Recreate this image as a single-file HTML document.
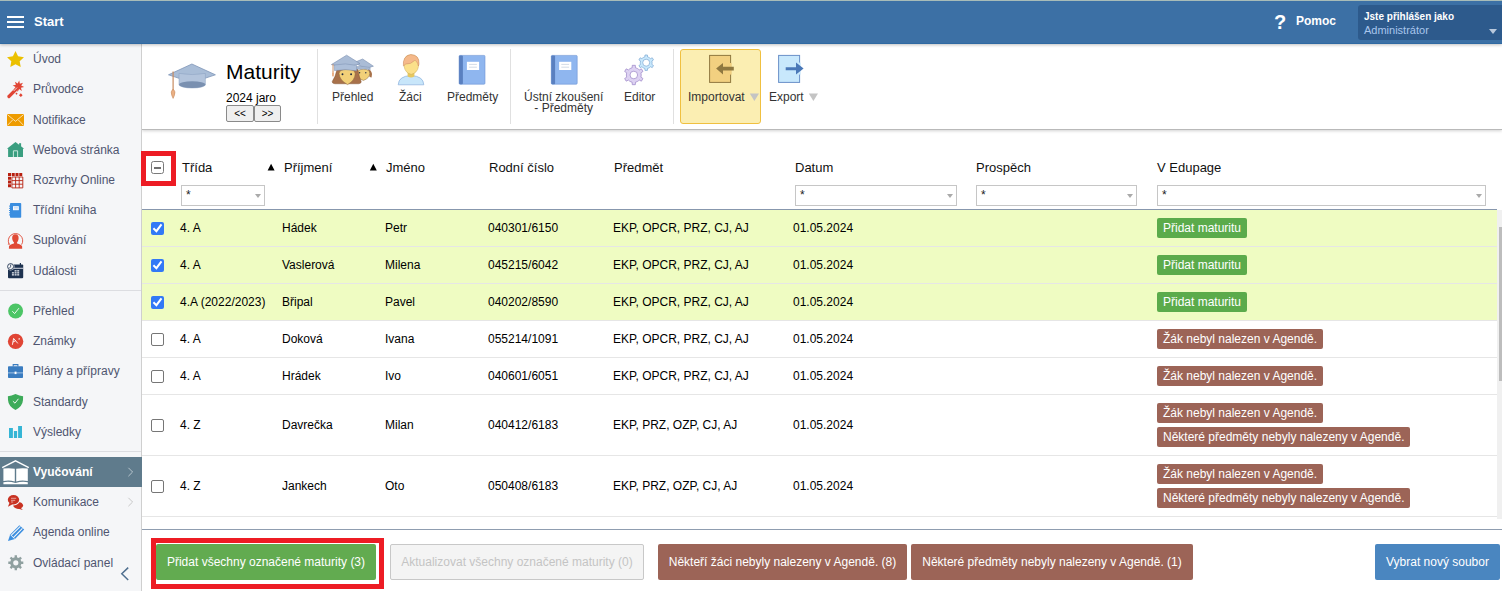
<!DOCTYPE html>
<html><head><meta charset="utf-8">
<style>
*{box-sizing:border-box}
html,body{margin:0;padding:0}
body{width:1502px;height:591px;overflow:hidden;position:relative;background:#fff;font-family:"Liberation Sans",sans-serif;color:#000}
.a{position:absolute}
.t{position:absolute;white-space:nowrap;line-height:14px;font-size:12px}
#top{left:0;top:0;width:1502px;height:44px;background:#3c70a5;border-top:1px solid #a8bcb8;border-bottom:1px solid #2f69a2;box-shadow:0 1px 3px rgba(0,0,0,.25);z-index:5}
#side{left:0;top:44px;width:142px;height:547px;background:#f5f6f8;border-right:1px solid #cfcfcf;z-index:2}
.si{position:absolute;left:33px;font-size:12px;line-height:14px;color:#4f5570;white-space:nowrap}
.ic{position:absolute;left:7px;width:17px;height:17px}
.sep{position:absolute;left:0;width:141px;height:1px;background:#dcdde1}
#tb{left:142px;top:44px;width:1360px;height:86px;background:#fff;border-bottom:1px solid #b9b9b9;box-shadow:0 1px 3px rgba(0,0,0,.18);z-index:1}
.vs{position:absolute;top:49px;width:1px;height:75px;background:#e0e0e0;z-index:3}
.bl{position:absolute;font-size:12px;line-height:11px;color:#333;white-space:nowrap;text-align:center;z-index:3}
.th{position:absolute;top:160px;font-size:13px;line-height:15px;color:#111;white-space:nowrap}
.flt{position:absolute;top:185px;height:21px;border:1px solid #c6c6c6;background:#fff}
.flt span{position:absolute;left:4px;top:2px;font-size:12px;color:#222}
.flt i{position:absolute;right:3px;top:8px;width:0;height:0;border-left:3.5px solid transparent;border-right:3.5px solid transparent;border-top:4px solid #aaa}
.row{position:absolute;left:142px;width:1355px;border-bottom:1px solid #e6e6e6}
.g{background:#effcc2}
.td{position:absolute;font-size:12px;line-height:14px;color:#000;white-space:nowrap}
.cb{position:absolute;left:151px;width:13px;height:13px;border-radius:2px}
.cbon{background:#3279f6}
.cboff{border:1px solid #767676;background:#fff}
.cb svg{display:block}
.bd{position:absolute;left:1157px;height:20px;border-radius:2px;color:#fff;font-size:12px;line-height:14px;padding:3px 6px 0 6px;white-space:nowrap}
.bg{background:#5bab4b}
.bb{background:#9c6457}
.btn{position:absolute;top:544px;height:36px;border-radius:2px;color:#fff;font-size:12px;line-height:36px;text-align:center;white-space:nowrap}
</style></head><body>

<!-- TOP BAR -->
<div id="top" class="a">
  <div class="a" style="left:7px;top:15px;width:17px;height:2px;background:#fff"></div>
  <div class="a" style="left:7px;top:20px;width:17px;height:2px;background:#fff"></div>
  <div class="a" style="left:7px;top:25px;width:17px;height:2px;background:#fff"></div>
  <div class="t" style="left:34px;top:14px;font-size:13px;font-weight:bold;color:#fff">Start</div>
  <div class="t" style="left:1274px;top:10px;font-size:20px;line-height:22px;font-weight:bold;color:#fff">?</div>
  <div class="t" style="left:1296px;top:13px;font-weight:bold;color:#fff">Pomoc</div>
  <div class="a" style="left:1358px;top:4px;width:150px;height:35px;background:#2d5a8c;border-radius:3px"></div>
  <div class="t" style="left:1364px;top:9px;font-size:10px;font-weight:bold;color:#fff">Jste přihlášen jako</div>
  <div class="t" style="left:1364px;top:22px;font-size:11px;color:#a9c6ec">Administrátor</div>
  <div class="a" style="left:1489px;top:28px;width:0;height:0;border-left:4px solid transparent;border-right:4px solid transparent;border-top:5px solid #b8c8dc"></div>
</div>

<!-- SIDEBAR -->
<div id="side" class="a">
</div>
<div id="sideitems" class="a" style="left:0;top:0;z-index:3">
  <div class="si" style="top:52px">Úvod</div>
  <div class="si" style="top:82px">Průvodce</div>
  <div class="si" style="top:113px">Notifikace</div>
  <div class="si" style="top:143px">Webová stránka</div>
  <div class="si" style="top:173px">Rozvrhy Online</div>
  <div class="si" style="top:203px">Třídní kniha</div>
  <div class="si" style="top:233px">Suplování</div>
  <div class="si" style="top:264px">Události</div>
  <div class="sep" style="top:290px"></div>
  <div class="si" style="top:304px">Přehled</div>
  <div class="si" style="top:334px">Známky</div>
  <div class="si" style="top:364px">Plány a přípravy</div>
  <div class="si" style="top:395px">Standardy</div>
  <div class="si" style="top:425px">Výsledky</div>
  <div class="sep" style="top:451px"></div>
  <div class="a" style="left:0;top:457px;width:142px;height:30px;background:#5f7b8c"></div>
  <div class="si" style="top:465px;color:#fff;font-weight:bold">Vyučování</div>
  <div class="si" style="top:495px">Komunikace</div>
  <div class="si" style="top:525px">Agenda online</div>
  <div class="si" style="top:556px">Ovládací panel</div>
</div>

<!-- TOOLBAR -->
<div id="tb" class="a"></div>
<div class="vs" style="left:317px"></div>
<div class="vs" style="left:510px"></div>
<div class="vs" style="left:673px"></div>
<div class="t" style="left:226px;top:61px;font-size:21px;line-height:22px;color:#000;z-index:3">Maturity</div>
<div class="t" style="left:226px;top:91px;color:#000;z-index:3">2024 jaro</div>
<div class="a" style="left:226px;top:105px;width:28px;height:17px;border:1px solid #8a8a8a;border-radius:2px;background:#efefef;z-index:3;font-size:10px;line-height:16px;text-align:center">&lt;&lt;</div>
<div class="a" style="left:254px;top:105px;width:27px;height:17px;border:1px solid #8a8a8a;border-radius:2px;background:#efefef;z-index:3;font-size:10px;line-height:16px;text-align:center">&gt;&gt;</div>

<div class="a" style="left:680px;top:49px;width:81px;height:75px;background:#fbeeb2;border:1px solid #f0c040;border-radius:3px;z-index:2"></div>

<div class="bl" style="left:332px;top:92px">Přehled</div>
<div class="bl" style="left:399px;top:92px">Žáci</div>
<div class="bl" style="left:447px;top:92px">Předměty</div>
<div class="bl" style="left:524px;top:92px">Ústní zkoušení<br>- Předměty</div>
<div class="bl" style="left:624px;top:92px">Editor</div>
<div class="bl" style="left:688px;top:92px">Importovat</div>
<div class="bl" style="left:769px;top:92px">Export</div>

<!-- TABLE HEADER -->
<div class="a" style="left:142px;top:130px;width:1360px;height:80px;background:#fff"></div>
<div class="a" style="left:142px;top:209px;width:1355px;height:1px;background:#8797ad"></div>
<div class="th" style="left:182px">Třída</div>
<div class="th" style="left:284px">Příjmení</div>
<div class="th" style="left:386px">Jméno</div>
<div class="th" style="left:489px">Rodní číslo</div>
<div class="th" style="left:614px">Předmět</div>
<div class="th" style="left:795px">Datum</div>
<div class="th" style="left:976px">Prospěch</div>
<div class="th" style="left:1157px">V Edupage</div>
<div class="flt" style="left:181px;width:84px"><span>*</span><i></i></div>
<div class="flt" style="left:795px;width:162px"><span>*</span><i></i></div>
<div class="flt" style="left:976px;width:161px"><span>*</span><i></i></div>
<div class="flt" style="left:1157px;width:329px"><span>*</span><i></i></div>

<!-- ROWS -->
<div class="row g" style="top:210px;height:37px"></div>
<div class="row g" style="top:247px;height:37px"></div>
<div class="row g" style="top:284px;height:37px"></div>
<div class="row" style="top:321px;height:37px"></div>
<div class="row" style="top:358px;height:37px"></div>
<div class="row" style="top:395px;height:61px"></div>
<div class="row" style="top:456px;height:61px"></div>

<div class="cb cbon" style="top:222px"><svg width=13 height=13 viewBox="0 0 13 13"><path d="M2.4 6.3 L5.4 9.2 L10.5 2.3" stroke="#fff" stroke-width="2" fill="none"/></svg></div>
<div class="td" style="left:180px;top:221px">4. A</div>
<div class="td" style="left:282px;top:221px">Hádek</div>
<div class="td" style="left:385px;top:221px">Petr</div>
<div class="td" style="left:488px;top:221px">040301/6150</div>
<div class="td" style="left:613px;top:221px">EKP, OPCR, PRZ, CJ, AJ</div>
<div class="td" style="left:793px;top:221px">01.05.2024</div>
<div class="bd bg" style="top:218px">Přidat maturitu</div>
<div class="cb cbon" style="top:259px"><svg width=13 height=13 viewBox="0 0 13 13"><path d="M2.4 6.3 L5.4 9.2 L10.5 2.3" stroke="#fff" stroke-width="2" fill="none"/></svg></div>
<div class="td" style="left:180px;top:258px">4. A</div>
<div class="td" style="left:282px;top:258px">Vaslerová</div>
<div class="td" style="left:385px;top:258px">Milena</div>
<div class="td" style="left:488px;top:258px">045215/6042</div>
<div class="td" style="left:613px;top:258px">EKP, OPCR, PRZ, CJ, AJ</div>
<div class="td" style="left:793px;top:258px">01.05.2024</div>
<div class="bd bg" style="top:255px">Přidat maturitu</div>
<div class="cb cbon" style="top:296px"><svg width=13 height=13 viewBox="0 0 13 13"><path d="M2.4 6.3 L5.4 9.2 L10.5 2.3" stroke="#fff" stroke-width="2" fill="none"/></svg></div>
<div class="td" style="left:180px;top:295px">4.A (2022/2023)</div>
<div class="td" style="left:282px;top:295px">Břipal</div>
<div class="td" style="left:385px;top:295px">Pavel</div>
<div class="td" style="left:488px;top:295px">040202/8590</div>
<div class="td" style="left:613px;top:295px">EKP, OPCR, PRZ, CJ, AJ</div>
<div class="td" style="left:793px;top:295px">01.05.2024</div>
<div class="bd bg" style="top:292px">Přidat maturitu</div>
<div class="cb cboff" style="top:333px"></div>
<div class="td" style="left:180px;top:332px">4. A</div>
<div class="td" style="left:282px;top:332px">Doková</div>
<div class="td" style="left:385px;top:332px">Ivana</div>
<div class="td" style="left:488px;top:332px">055214/1091</div>
<div class="td" style="left:613px;top:332px">EKP, OPCR, PRZ, CJ, AJ</div>
<div class="td" style="left:793px;top:332px">01.05.2024</div>
<div class="bd bb" style="top:329px">Žák nebyl nalezen v Agendě.</div>
<div class="cb cboff" style="top:370px"></div>
<div class="td" style="left:180px;top:369px">4. A</div>
<div class="td" style="left:282px;top:369px">Hrádek</div>
<div class="td" style="left:385px;top:369px">Ivo</div>
<div class="td" style="left:488px;top:369px">040601/6051</div>
<div class="td" style="left:613px;top:369px">EKP, OPCR, PRZ, CJ, AJ</div>
<div class="td" style="left:793px;top:369px">01.05.2024</div>
<div class="bd bb" style="top:366px">Žák nebyl nalezen v Agendě.</div>
<div class="cb cboff" style="top:419px"></div>
<div class="td" style="left:180px;top:418px">4. Z</div>
<div class="td" style="left:282px;top:418px">Davrečka</div>
<div class="td" style="left:385px;top:418px">Milan</div>
<div class="td" style="left:488px;top:418px">040412/6183</div>
<div class="td" style="left:613px;top:418px">EKP, PRZ, OZP, CJ, AJ</div>
<div class="td" style="left:793px;top:418px">01.05.2024</div>
<div class="bd bb" style="top:403px">Žák nebyl nalezen v Agendě.</div>
<div class="bd bb" style="top:427px">Některé předměty nebyly nalezeny v Agendě.</div>
<div class="cb cboff" style="top:480px"></div>
<div class="td" style="left:180px;top:479px">4. Z</div>
<div class="td" style="left:282px;top:479px">Jankech</div>
<div class="td" style="left:385px;top:479px">Oto</div>
<div class="td" style="left:488px;top:479px">050408/6183</div>
<div class="td" style="left:613px;top:479px">EKP, PRZ, OZP, CJ, AJ</div>
<div class="td" style="left:793px;top:479px">01.05.2024</div>
<div class="bd bb" style="top:464px">Žák nebyl nalezen v Agendě.</div>
<div class="bd bb" style="top:488px">Některé předměty nebyly nalezeny v Agendě.</div>

<!-- FOOTER -->
<div class="a" style="left:142px;top:529px;width:1360px;height:1px;background:#8f9db0"></div>
<div class="btn" style="left:156px;width:220px;background:#62ab50">Přidat všechny označené maturity (3)</div>
<div class="btn" style="left:390px;width:254px;background:#f4f4f4;border:1px solid #c8c8c8;color:#c4c4c4;line-height:34px">Aktualizovat všechny označené maturity (0)</div>
<div class="btn" style="left:658px;width:249px;background:#9c6457">Někteří žáci nebyly nalezeny v Agendě. (8)</div>
<div class="btn" style="left:911px;width:282px;background:#9c6457">Některé předměty nebyly nalezeny v Agendě. (1)</div>
<div class="btn" style="left:1375px;width:125px;background:#4a86c0">Vybrat nový soubor</div>


<!-- EXTRAS -->
<div class="a" style="left:1497px;top:210px;width:5px;height:309px;background:#f0f0f0;z-index:4"></div>
<div class="a" style="left:1499px;top:227px;width:3px;height:154px;background:#bdbdbd;z-index:4"></div>
<div class="a" style="left:151px;top:161px;width:13px;height:13px;border:1px solid #7a7a7a;border-radius:2.5px;background:#fff;z-index:4"></div>
<div class="a" style="left:154px;top:167px;width:7px;height:2px;background:#707070;z-index:5"></div>
<svg class="a" style="left:0;top:0;z-index:4" width="1502" height="591"><path d="M267.6,170.4 L271.1,163.8 L274.6,170.4Z M369.8,170.4 L373.3,163.8 L376.8,170.4Z" fill="#000"/></svg>
<div class="a" style="left:141px;top:151px;width:35px;height:35px;border:5px solid #ed1c24;z-index:6"></div>
<div class="a" style="left:151px;top:538px;width:233px;height:51px;border:5px solid #ed1c24;z-index:6"></div>
<!--ICONS--><svg class="a" style="left:0;top:0;z-index:10;pointer-events:none" width="1502" height="591" viewBox="0 0 1502 591"><polygon points="15.50,51.00 18.09,56.34 23.96,57.15 19.68,61.26 20.73,67.10 15.50,64.30 10.27,67.10 11.32,61.26 7.04,57.15 12.91,56.34" fill="#ebc000"/><g fill="#e04535"><path d="M7.6,95.4 L15.6,87.4 L18,89.8 L10,97.8 Q8.9,98.8 7.8,97.8 Q6.8,96.6 7.6,95.4Z"/><polygon points="18.40,80.50 19.51,83.62 22.50,82.20 21.08,85.19 24.20,86.30 21.08,87.41 22.50,90.40 19.51,88.98 18.40,92.10 17.29,88.98 14.30,90.40 15.72,87.41 12.60,86.30 15.72,85.19 14.30,82.20 17.29,83.62" transform="rotate(8 18.4 86.3)"/><rect x="15.7" y="92.9" width="1.6" height="1.6" transform="rotate(45 16.5 93.7)"/><rect x="19.5" y="93.9" width="2.6" height="2.6" transform="rotate(45 20.8 95.2)"/></g><path d="M13.6,91 L17,87.6" stroke="#fff" stroke-width="0.9" opacity=".85"/><rect x="7" y="114" width="17" height="12" fill="#ee9c00"/><path d="M7.3,114.5 L15.5,121.3 L23.7,114.5 M7.3,125.5 L12.6,120 M23.7,125.5 L18.4,120" stroke="#fff" stroke-width="0.8" fill="none" opacity=".85"/><path d="M15.5,142 L24.2,148.8 L23,148.8 L23,157 L8.1,157 L8.1,148.8 L6.9,148.8 Z" fill="#3a9e80"/><rect x="19.1" y="143.2" width="2" height="4" fill="#3a9e80"/><path d="M13.4,157 L13.4,150.8 L17.6,150.8 L17.6,157" stroke="#d8eee6" stroke-width="0.9" fill="none"/><rect x="8.00" y="173" width="3" height="3" fill="#b82010"/><rect x="11.75" y="173" width="3" height="3" fill="#b82010"/><rect x="15.50" y="173" width="3" height="3" fill="#b82010"/><rect x="19.25" y="173" width="3" height="3" fill="#b82010"/><rect x="8" y="176.75" width="3" height="3" fill="#b82010"/><rect x="8" y="180.50" width="3" height="3" fill="#b82010"/><rect x="8" y="184.25" width="3" height="3" fill="#b82010"/><path d="M11.9,177 H22.8 V187.9 H11.9 Z M15.6,177 V187.9 M19.2,177 V187.9 M11.9,180.6 H22.8 M11.9,184.2 H22.8" stroke="#b82010" stroke-width="0.9" fill="none"/><rect x="10" y="203" width="11.2" height="14.8" rx="0.8" fill="#3a8ee0"/><g fill="#3a8ee0"><rect x="9" y="205.6" width="1.6" height="1"/><rect x="9" y="207.8" width="1.6" height="1"/><rect x="9" y="210" width="1.6" height="1"/><rect x="9" y="212.2" width="1.6" height="1"/><rect x="9" y="214.4" width="1.6" height="1"/></g><rect x="13" y="206.2" width="5.8" height="4" fill="#fff"/><path d="M13.8,207.6 H18 M13.8,208.9 H18" stroke="#a8c8f0" stroke-width=".6"/><g fill="#e04a35"><path d="M15.4,234.3 C17.8,234.3 18.8,236.2 18.6,238.6 C18.4,240.8 17.6,242 16.9,242.6 L17.1,243.4 C19.6,244.2 21.9,245 22.1,246.2 L22.2,248.8 L8.9,248.8 L9,246.2 C9.2,245 11.4,244.2 13.9,243.4 L14.1,242.6 C13.4,242 12.4,240.8 12.2,238.6 C12,236.2 13,234.3 15.4,234.3Z"/><path d="M8.6,243.2 L7.6,244.6 L10.4,244.6 Z"/></g><path d="M9.2,244.2 A7.2,7.2 0 1 1 21.6,244.6" stroke="#e04a35" stroke-width="0.9" fill="none"/><rect x="8" y="264.6" width="15.2" height="13.6" rx="1" fill="#1e3250"/><rect x="19.8" y="263" width="1.2" height="2.4" fill="#1e3250"/><g fill="#e8ecf2"><rect x="14.6" y="270.2" width="2" height="1.3"/><rect x="17.2" y="270.2" width="2" height="1.3"/><rect x="11.9" y="272.2" width="2" height="1.3"/><rect x="14.6" y="272.2" width="2" height="1.3"/><rect x="17.2" y="272.2" width="2" height="1.3"/><rect x="11.9" y="274.2" width="2" height="1.3"/><rect x="14.6" y="274.2" width="2" height="1.3"/><rect x="17.2" y="274.2" width="2" height="1.3"/><rect x="14" y="267.8" width="9.2" height=".9"/></g><circle cx="10.6" cy="266.6" r="3.8" fill="#f5f6f8"/><circle cx="10.6" cy="266.6" r="3" fill="none" stroke="#1e3250" stroke-width="0.9"/><path d="M10.6,264.6 L10.6,266.8 L9.5,268" stroke="#1e3250" stroke-width=".8" fill="none"/><circle cx="15.6" cy="311" r="7.5" fill="#4cc566"/><path d="M12.3,311.2 L14.6,313.6 L18.9,308.2" stroke="#fff" stroke-width="0.9" fill="none"/><circle cx="15.6" cy="341.4" r="7.7" fill="#e04535"/><path d="M12.4,344.8 L13.6,338.4 L17.8,343.4 M12.9,342.1 L15.7,340.6" stroke="#fff" stroke-width="0.9" fill="none"/><path d="M18.8,338.2 L19.6,339.6 M18.6,339.4 L19.8,338.4" stroke="#fff" stroke-width=".7"/><rect x="8" y="366.2" width="15" height="11.8" rx="0.8" fill="#3a7cc0"/><path d="M13.2,366.4 V364.6 H17.9 V366.4" stroke="#3a7cc0" stroke-width="1.1" fill="none"/><rect x="8" y="372" width="15" height="1.6" fill="#78a6d6"/><rect x="14.6" y="371.6" width="1.9" height="2.5" fill="#fff"/><path d="M15.5,394 Q19.5,395.7 23.1,396.2 L23,400 Q22.6,406.4 15.5,410 Q8.4,406.4 8,400 L7.9,396.2 Q11.5,395.7 15.5,394Z" fill="#3dab5a"/><path d="M12.9,401.2 L15,403.2 L18.4,398.8" stroke="#fff" stroke-width=".9" fill="none"/><g fill="#35b5d5"><rect x="9" y="428" width="3.9" height="10"/><rect x="13.9" y="431" width="3.2" height="7"/><rect x="18.1" y="426" width="3.9" height="12"/></g><path d="M2.2,467.6 L15.5,460.8 L28.8,467.6" stroke="#fff" stroke-width="1.3" fill="none"/><path d="M3.4,468.6 Q9,467.6 14.8,468.8 L14.8,481.4 Q9,479.6 3.4,481 Z M16.2,468.8 Q22,467.6 27.8,468.6 L27.8,481 Q22,479.6 16.2,481.4 Z" fill="#fff"/><path d="M3.4,482.2 Q9,481 15.5,483 Q22,481 27.8,482.2 L27.8,484.2 L3.4,484.2 Z" fill="#fff"/><g fill="#c83222"><ellipse cx="18.2" cy="505.4" rx="4.9" ry="3.5"/><path d="M20.4,507.4 L22.8,510 L17.6,508.6Z"/></g><ellipse cx="13.5" cy="499.8" rx="6.6" ry="5.6" fill="#f5f6f8"/><g fill="#c83222"><ellipse cx="13.5" cy="499.8" rx="5.7" ry="4.7"/><path d="M9.6,502.6 L8,506.8 L12.6,504.2Z"/></g><path d="M11,498.3 H16.2 M11,500.3 H15.2 M11,502 H13.2" stroke="#f4d0cc" stroke-width=".7"/><path d="M8,541 L10.2,534.6 L19.4,525.2 L24.2,529.6 L15,539 Z" fill="#3a8ee0"/><path d="M11.4,535.2 L20.4,526.4 M13.4,537.6 L22.4,528.4" stroke="#f5f6f8" stroke-width="1.1"/><path d="M10.6,534.8 L14.4,538.6" stroke="#f5f6f8" stroke-width="1"/><path d="M14.62,557.33 L14.61,555.29 L16.99,555.29 L16.98,557.33 L17.47,557.45 L17.94,557.63 L18.40,557.84 L18.84,558.10 L20.27,556.65 L21.95,558.33 L20.50,559.76 L20.76,560.20 L20.97,560.66 L21.15,561.13 L21.27,561.62 L23.31,561.61 L23.31,563.99 L21.27,563.98 L21.15,564.47 L20.97,564.94 L20.76,565.40 L20.50,565.84 L21.95,567.27 L20.27,568.95 L18.84,567.50 L18.40,567.76 L17.94,567.97 L17.47,568.15 L16.98,568.27 L16.99,570.31 L14.61,570.31 L14.62,568.27 L14.13,568.15 L13.66,567.97 L13.20,567.76 L12.76,567.50 L11.33,568.95 L9.65,567.27 L11.10,565.84 L10.84,565.40 L10.63,564.94 L10.45,564.47 L10.33,563.98 L8.29,563.99 L8.29,561.61 L10.33,561.62 L10.45,561.13 L10.63,560.66 L10.84,560.20 L11.10,559.76 L9.65,558.33 L11.33,556.65 L12.76,558.10 L13.20,557.84 L13.66,557.63 L14.13,557.45Z M13.20,562.80 a2.6,2.6 0 1,0 5.2,0 a2.6,2.6 0 1,0 -5.2,0Z" fill="#8fa0a0" fill-rule="evenodd"/><path d="M128.4,467.8 L132.6,472 L128.4,476.2" stroke="#b8c6ce" stroke-width="1" fill="none"/><path d="M128.4,497.8 L132.6,502 L128.4,506.2" stroke="#c8c8c8" stroke-width="1" fill="none"/><path d="M128.2,567.6 L121.8,573.8 L128.2,580" stroke="#4f6f8f" stroke-width="1.5" fill="none"/><path d="M168.5,74.8 L191.9,64 L215.4,74.8 L191.9,82.6 Z" fill="#a9bdd7" stroke="#7f96b8" stroke-width=".8"/><path d="M179,73.4 Q192.2,75.8 205.4,73.4 L205.4,84.6 A13.2,3.4 0 0 1 179,84.6 Z" fill="#b3c4dc" stroke="#8aa0c0" stroke-width=".5"/><ellipse cx="192.2" cy="84.6" rx="13.2" ry="3.3" fill="#7a90b0"/><path d="M173.1,71.6 L173.1,90" stroke="#c88c60" stroke-width="1.2"/><path d="M173.1,89 Q176.2,91.6 174.4,95.4 L173.1,98.4 L171.8,95.4 Q170,91.6 173.1,89Z" fill="#eab084" stroke="#c88c60" stroke-width=".6"/><path d="M368,69 Q371.4,70 372,74 L371.6,77.4 L369.6,77 Z" fill="#a8714a"/><path d="M357.2,73.4 Q357.4,69.2 363.6,69.2 Q369.8,69.2 369.8,73.6 Q369.4,78.4 363.4,80.4 Q357.6,78.6 357.2,73.4Z" fill="#f2d078" stroke="#8c6a40" stroke-width=".5"/><path d="M353.8,62.8 L362.6,59 L373.4,66.2 L366,68.4 Z" fill="#aabcd6" stroke="#7b8fb0" stroke-width=".6"/><path d="M356.4,66.6 L356.6,69.6 Q363.6,68 370.2,69.8 L370.2,67.4 Q363,65.8 356.4,66.6Z" fill="#a6b8d2" stroke="#7b8fb0" stroke-width=".4"/><path d="M337,69.6 L357.8,69.6 Q359.2,77 361.2,81.6 Q361.4,83.6 358.4,83.8 L335,83.8 Q332,83.6 332.2,81.6 Q335.4,77 337,69.6Z" fill="#a8714a" stroke="#7a4c2c" stroke-width=".4"/><path d="M339,73.6 Q339.2,69.4 347.2,69.4 Q355.2,69.4 355.2,73.8 Q355,80.4 347.6,84.6 Q339.6,80.4 339,73.6Z" fill="#f2d078" stroke="#8c6a40" stroke-width=".5"/><circle cx="342.5" cy="74.3" r=".95" fill="#1e2a40"/><circle cx="351.1" cy="74.3" r=".95" fill="#1e2a40"/><circle cx="359.6" cy="72.8" r=".7" fill="#2a3448"/><circle cx="365.8" cy="72.8" r=".7" fill="#2a3448"/><path d="M331.4,64.6 L346.6,55.2 L360,63.6 L347,67.6 Z" fill="#aabcd6" stroke="#7b8fb0" stroke-width=".6"/><path d="M334.2,65 L334.4,70.6 Q345.6,68.6 356.6,70.8 L356.6,65.4 Q345.4,62.6 334.2,65Z" fill="#adbfd9" stroke="#7b8fb0" stroke-width=".5"/><path d="M333,64.2 L333,72" stroke="#c88c60" stroke-width=".9"/><path d="M333,71 Q335,73.6 333.8,75.8 L333,77 L332.2,75.8 Q331,73.6 333,71Z" fill="#e8a87a"/><path d="M398.2,84.8 Q398.6,76 411,75.6 Q423.4,76 423.8,84.8 Z" fill="#c8e6fa" stroke="#8cb0dc" stroke-width=".7"/><path d="M407.6,72 L407.6,76.4 Q411,78.4 414.4,76.4 L414.4,72 Z" fill="#e6c860"/><path d="M404.2,62 Q404.2,54.8 411,54.8 Q418.6,55 418.6,62.4 L418.4,66.6 Q417.6,72.8 411.2,74.4 Q405,72.8 404.2,66.6 Z" fill="#fbe08a" stroke="#c8a850" stroke-width=".5"/><path d="M403.4,66 Q402.4,56.2 410.6,54.6 Q419.6,54.8 419,64.2 L418.4,66 Q417,60.2 414.4,60.6 Q411,64.4 405.8,64 Z" fill="#f5b98a" stroke="#c88a60" stroke-width=".5"/><rect x="459.1" y="55.4" width="25.9" height="28.8" rx="1" fill="#8fb6ef" stroke="#6f96d4" stroke-width=".6"/><rect x="459.1" y="55.4" width="3.8" height="28.8" rx="1" fill="#5a80c0"/><rect x="466.9" y="61.8" width="12.2" height="8.2" fill="#fff"/><path d="M469.1,64.4 H476.9 M469.1,67.2 H476.9" stroke="#c8d2e0" stroke-width=".8"/><rect x="551.3" y="55.4" width="25.9" height="28.8" rx="1" fill="#8fb6ef" stroke="#6f96d4" stroke-width=".6"/><rect x="551.3" y="55.4" width="3.8" height="28.8" rx="1" fill="#5a80c0"/><rect x="559.1" y="61.8" width="12.2" height="8.2" fill="#fff"/><path d="M561.3,64.4 H569.1 M561.3,67.2 H569.1" stroke="#c8d2e0" stroke-width=".8"/><path d="M632.11,67.80 L632.27,65.32 L635.33,65.32 L635.49,67.80 L636.52,68.12 L637.50,68.59 L638.40,69.20 L639.19,69.93 L641.42,68.83 L642.95,71.49 L640.88,72.86 L641.12,73.92 L641.20,75.00 L641.12,76.08 L640.88,77.14 L642.95,78.51 L641.42,81.17 L639.19,80.07 L638.40,80.80 L637.50,81.41 L636.52,81.88 L635.49,82.20 L635.33,84.68 L632.27,84.68 L632.11,82.20 L631.08,81.88 L630.10,81.41 L629.20,80.80 L628.41,80.07 L626.18,81.17 L624.65,78.51 L626.72,77.14 L626.48,76.08 L626.40,75.00 L626.48,73.92 L626.72,72.86 L624.65,71.49 L626.18,68.83 L628.41,69.93 L629.20,69.20 L630.10,68.59 L631.08,68.12Z M630.00,75.00 a3.8,3.8 0 1,0 7.6,0 a3.8,3.8 0 1,0 -7.6,0Z" fill="#ddd2f2" stroke="#9a82c6" stroke-width=".7" fill-rule="evenodd"/><path d="M644.85,56.96 L644.98,55.00 L647.42,55.00 L647.55,56.96 L648.37,57.21 L649.15,57.59 L649.86,58.08 L650.50,58.66 L652.26,57.79 L653.48,59.90 L651.85,60.99 L652.04,61.84 L652.10,62.70 L652.04,63.56 L651.85,64.41 L653.48,65.50 L652.26,67.61 L650.50,66.74 L649.86,67.32 L649.15,67.81 L648.37,68.19 L647.55,68.44 L647.42,70.40 L644.98,70.40 L644.85,68.44 L644.03,68.19 L643.25,67.81 L642.54,67.32 L641.90,66.74 L640.14,67.61 L638.92,65.50 L640.55,64.41 L640.36,63.56 L640.30,62.70 L640.36,61.84 L640.55,60.99 L638.92,59.90 L640.14,57.79 L641.90,58.66 L642.54,58.08 L643.25,57.59 L644.03,57.21Z M642.70,62.70 a3.5,3.5 0 1,0 7.0,0 a3.5,3.5 0 1,0 -7.0,0Z" fill="#c8e8fc" stroke="#7aa6d2" stroke-width=".7" fill-rule="evenodd"/><rect x="709.6" y="55.4" width="21" height="27" fill="#f2d080" stroke="#8f7840" stroke-width="1"/><rect x="729.6" y="63" width="2" height="11.6" fill="#f2d080"/><path d="M716.1,68.6 L723,62.9 L723,66.7 L733.8,66.7 L733.8,70.4 L723,70.4 L723,74.6 Z" fill="#8f7840"/><rect x="778.6" y="55.4" width="21" height="27" fill="#c8e8fc" stroke="#6a90c8" stroke-width="1"/><rect x="798.6" y="62.6" width="2" height="12" fill="#c8e8fc"/><path d="M803.6,68.6 L796,62.5 L796,67.3 L785.7,67.3 L785.7,70.3 L796,70.3 L796,74.6 Z" fill="#4a78b8"/><path d="M749.8,93.4 L759,93.4 L754.4,101 Z" fill="#c4c4c4"/><path d="M808.8,93.4 L818,93.4 L813.4,101 Z" fill="#c4c4c4"/></svg><!--/ICONS-->
</body></html>
